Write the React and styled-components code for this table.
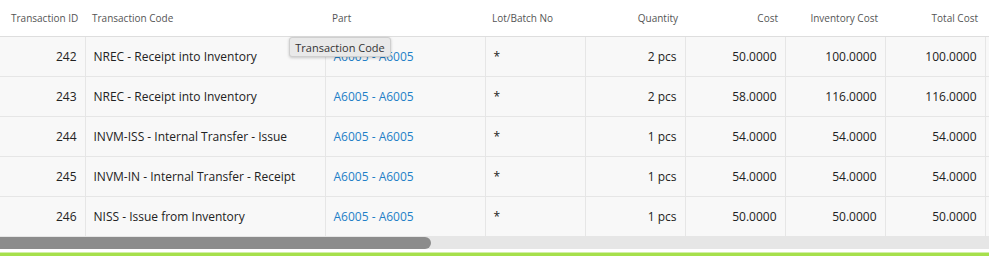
import React from "react";
import styled, { createGlobalStyle } from "styled-components";

const Global = createGlobalStyle`
  html, body { margin: 0; padding: 0; background: #fff; }
  body { font-family: "Open Sans", "Liberation Sans", sans-serif; }
`;

const Page = styled.div`
  position: relative;
  width: 989px;
  height: 256px;
  overflow: hidden;
  background: #fff;
  display: flex;
  flex-direction: column;
`;

const Viewport = styled.div`
  width: 989px;
  overflow: hidden;
`;

const Table = styled.table`
  border-collapse: collapse;
  table-layout: fixed;
  width: 1085px;
`;

const HeadCell = styled.th`
  height: 36px;
  padding: 0 ${(p) => (p.$align === "right" ? "7px" : "0")} 0 ${(p) => (p.$align === "right" ? "0" : "7px")};
  font-size: 10px;
  font-weight: 400;
  color: #555;
  text-align: ${(p) => p.$align || "left"};
  border-bottom: 1px solid #dedede;
  white-space: nowrap;
  background: #fff;
  &:first-child { padding-left: 11px; }
`;

const Row = styled.tr`
  background: #f8f8f8;
`;

const Cell = styled.td`
  height: 39px;
  padding: 0 ${(p) => (p.$align === "right" ? "8px" : "0")} 0 ${(p) => (p.$align === "right" ? "0" : "8px")};
  font-size: 12px;
  color: #222;
  text-align: ${(p) => p.$align || "left"};
  border-bottom: 1px solid #e6e6e6;
  border-right: 1px solid #e6e6e6;
  white-space: nowrap;
  overflow: hidden;
`;

const Link = styled.a`
  color: #1f7fc7;
  text-decoration: none;
`;

const Track = styled.div`
  height: 12px;
  background: #e6e6e6;
  display: flex;
`;

const Thumb = styled.div`
  width: 431px;
  height: 12px;
  background: #8c8c8c;
  border-radius: 0 6px 6px 0;
`;

const Gap = styled.div`
  height: 3px;
  background: #fff;
`;

const GreenBar = styled.div`
  height: 4px;
  background: #a6e04c;
  border-top: 1px solid #d2efa8;
  box-sizing: border-box;
`;

const Tooltip = styled.div`
  position: absolute;
  left: 289px;
  top: 37px;
  width: 102px;
  height: 20px;
  box-sizing: border-box;
  display: flex;
  align-items: center;
  justify-content: center;
  font-size: 11px;
  color: #333;
  background: #e9e9e9;
  border: 1px solid #cfcfcf;
  border-radius: 3px;
  box-shadow: 0 1px 3px rgba(0, 0, 0, 0.2);
  white-space: nowrap;
`;

const columns = [
  { title: "Transaction ID", width: 85, align: "right", headAlign: "left" },
  { title: "Transaction Code", width: 240 },
  { title: "Part", width: 160 },
  { title: "Lot/Batch No", width: 100 },
  { title: "Quantity", width: 100, align: "right" },
  { title: "Cost", width: 100, align: "right" },
  { title: "Inventory Cost", width: 100, align: "right" },
  { title: "Total Cost", width: 100, align: "right" },
  { title: "", width: 100 },
];

const rows = [
  ["242", "NREC - Receipt into Inventory", "A6005 - A6005", "*", "2 pcs", "50.0000", "100.0000", "100.0000"],
  ["243", "NREC - Receipt into Inventory", "A6005 - A6005", "*", "2 pcs", "58.0000", "116.0000", "116.0000"],
  ["244", "INVM-ISS - Internal Transfer - Issue", "A6005 - A6005", "*", "1 pcs", "54.0000", "54.0000", "54.0000"],
  ["245", "INVM-IN - Internal Transfer - Receipt", "A6005 - A6005", "*", "1 pcs", "54.0000", "54.0000", "54.0000"],
  ["246", "NISS - Issue from Inventory", "A6005 - A6005", "*", "1 pcs", "50.0000", "50.0000", "50.0000"],
];

export default function App() {
  return (
    <>
      <Global />
      <Page>
        <Viewport>
          <Table>
            <colgroup>
              {columns.map((c, i) => (
                <col key={i} style={{ width: c.width }} />
              ))}
            </colgroup>
            <thead>
              <tr>
                {columns.map((c, i) => (
                  <HeadCell key={i} $align={c.headAlign || c.align}>
                    {c.title}
                  </HeadCell>
                ))}
              </tr>
            </thead>
            <tbody>
              {rows.map((r, ri) => (
                <Row key={ri}>
                  {r.map((v, ci) => (
                    <Cell key={ci} $align={columns[ci].align}>
                      {ci === 2 ? <Link href="#">{v}</Link> : v}
                    </Cell>
                  ))}
                  <Cell />
                </Row>
              ))}
            </tbody>
          </Table>
        </Viewport>
        <Track>
          <Thumb />
        </Track>
        <Gap />
        <GreenBar />
        <Tooltip>Transaction Code</Tooltip>
      </Page>
    </>
  );
}
